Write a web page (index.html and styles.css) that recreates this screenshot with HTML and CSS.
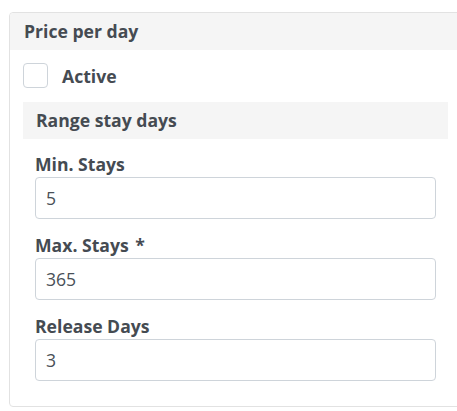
FILE: index.html
```html
<!DOCTYPE html>
<html>
<head>
<meta charset="utf-8">
<link rel="stylesheet" href="styles.css">
</head>
<body>
<div class="card">
  <div class="card-header">Price per day</div>
  <div class="card-body">
    <label class="check-row">
      <span class="checkbox"></span>
      <span class="check-label">Active</span>
    </label>
    <div class="section">
      <div class="section-header">Range stay days</div>
      <div class="fields">
        <div class="field">
          <div class="field-label">Min. Stays</div>
          <div class="input">5</div>
        </div>
        <div class="field">
          <div class="field-label">Max. Stays <span class="req">*</span></div>
          <div class="input">365</div>
        </div>
        <div class="field">
          <div class="field-label">Release Days</div>
          <div class="input">3</div>
        </div>
      </div>
    </div>
  </div>
</div>
</body>
</html>
```
FILE: styles.css
```css
html { overflow: hidden; }
body {
  margin: 12px 0 0 9px;
  font-family: "Open Sans", "Liberation Sans", sans-serif;
  color: #454b52;
  background: #fff;
}
.card {
  width: 460px;
  border: 1px solid #e2e2e2;
  border-radius: 4px;
  box-sizing: border-box;
}
.card-header {
  background: #f5f5f5;
  font-weight: 700;
  font-size: 17.6px;
  line-height: 37px;
  height: 37px;
  padding: 0 14px;
  border-radius: 4px 4px 0 0;
}
.card-body {
  padding: 13px 0 25px 13px;
}
.check-row {
  display: flex;
  align-items: center;
  height: 25px;
  margin-bottom: 14px;
}
.checkbox {
  width: 25px;
  height: 25px;
  box-sizing: border-box;
  border: 1px solid #ced4da;
  border-radius: 4px;
  background: #fff;
}
.check-label {
  font-weight: 700;
  font-size: 17.6px;
  margin-left: 14px;
}
.section {
  width: 425px;
}
.section-header {
  background: #f5f5f5;
  font-weight: 700;
  font-size: 17.6px;
  height: 37px;
  line-height: 37px;
  padding: 0 13px;
}
.fields {
  padding: 11px 12px 0 12px;
  display: flex;
  flex-direction: column;
  gap: 12px;
}
.field-label {
  font-weight: 700;
  font-size: 17.6px;
  line-height: 24px;
  padding-top: 2px;
  margin-bottom: 1px;
}
.req { margin-left: 2px; }
.input {
  height: 42px;
  box-sizing: border-box;
  border: 1px solid #ced4da;
  border-radius: 4px;
  padding: 0 10px;
  line-height: 40px;
  font-size: 17.6px;
  color: #495057;
}
```
